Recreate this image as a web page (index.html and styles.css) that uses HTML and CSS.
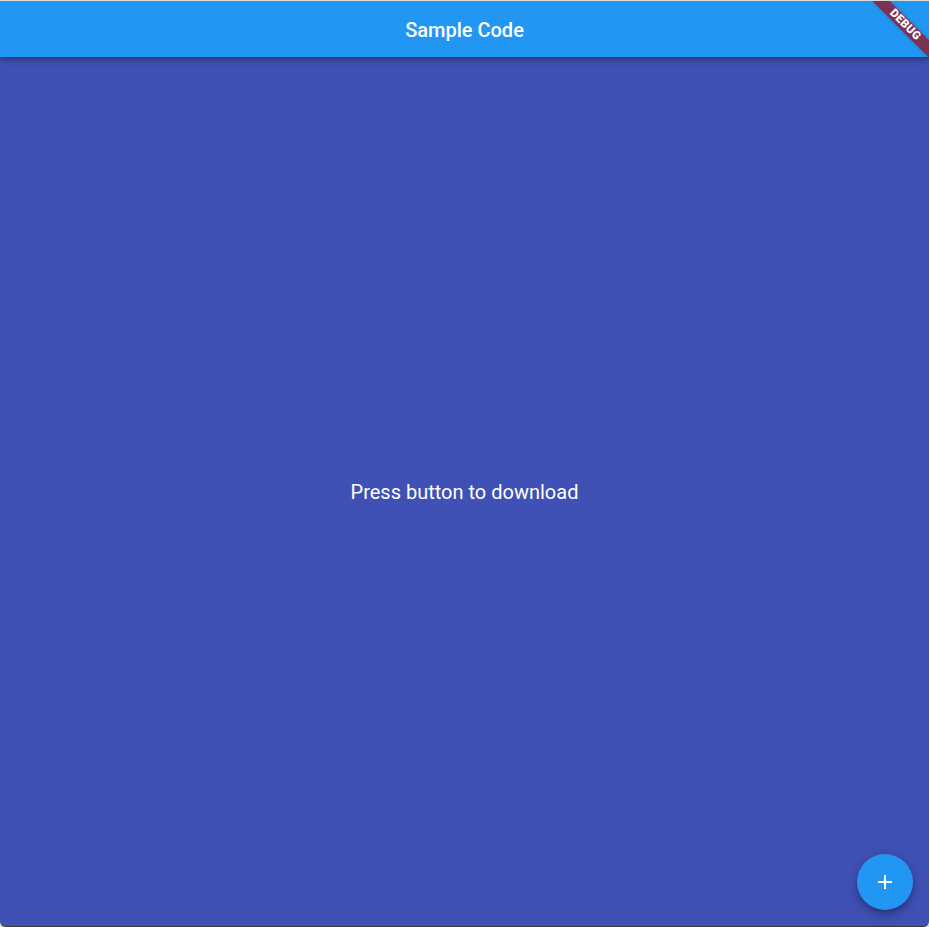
FILE: index.html
```html
<!DOCTYPE html>
<html lang="en">
<head>
<meta charset="utf-8">
<title>Sample Code</title>
<link rel="stylesheet" href="styles.css">
</head>
<body>
<div class="window">
  <div class="app">
    <header class="appbar">
      <h1 class="title">Sample Code</h1>
    </header>
    <main class="content">
      <p class="message">Press button to download</p>
    </main>
    <button class="fab" type="button" aria-label="Add">
      <svg width="24" height="24" viewBox="0 0 24 24" aria-hidden="true">
        <path d="M19 13h-6v6h-2v-6H5v-2h6V5h2v6h6v2z" fill="#ffffff"/>
      </svg>
    </button>
    <div class="banner"><span class="banner-text">DEBUG</span></div>
  </div>
</div>
</body>
</html>
```
FILE: styles.css
```css
html, body {
  margin: 0;
  padding: 0;
  height: 100%;
}
body {
  background: #d9d9d9;
  font-family: Roboto, "Noto Sans", "Liberation Sans", sans-serif;
}
.window {
  height: 927px;
  box-sizing: border-box;
  padding-top: 1px;
  display: flex;
  flex-direction: column;
  background: #d9d9d9;
}
.app {
  position: relative;
  flex: 1;
  display: flex;
  flex-direction: column;
  overflow: hidden;
  background: #3f51b5;
  border-bottom: 1px solid #3a3a3a;
  border-radius: 0 0 6px 6px;
}
.appbar {
  height: 56px;
  flex: none;
  background: #2196f3;
  display: flex;
  align-items: center;
  justify-content: center;
  box-shadow: 0 2px 4px -1px rgba(0,0,0,0.2), 0 4px 5px 0 rgba(0,0,0,0.14), 0 1px 10px 0 rgba(0,0,0,0.12);
  position: relative;
  z-index: 1;
}
.title {
  margin: 0;
  color: #ffffff;
  font-size: 20px;
  font-weight: 500;
  line-height: 1;
  transform: translateY(1px);
}
.content {
  flex: 1;
  display: flex;
  align-items: center;
  justify-content: center;
}
.message {
  margin: 0;
  color: #ffffff;
  font-size: 20px;
  font-weight: 400;
  line-height: 1;
}
.fab {
  position: absolute;
  right: 16px;
  bottom: 16px;
  width: 56px;
  height: 56px;
  border: none;
  border-radius: 50%;
  padding: 0;
  background: #2196f3;
  display: flex;
  align-items: center;
  justify-content: center;
  box-shadow: 0 3px 5px -1px rgba(0,0,0,0.2), 0 6px 10px 0 rgba(0,0,0,0.14), 0 1px 18px 0 rgba(0,0,0,0.12);
  z-index: 2;
}
.banner {
  position: absolute;
  left: 865px;
  top: 18px;
  width: 80px;
  height: 12px;
  background: #7c3252;
  transform: rotate(45deg);
  display: flex;
  align-items: center;
  justify-content: center;
  box-shadow: 0 0 3px rgba(0,0,0,0.3);
  z-index: 3;
}
.banner-text {
  color: #ffffff;
  font-size: 11.5px;
  font-weight: 900;
  line-height: 1;
  letter-spacing: 0.3px;
}
```
